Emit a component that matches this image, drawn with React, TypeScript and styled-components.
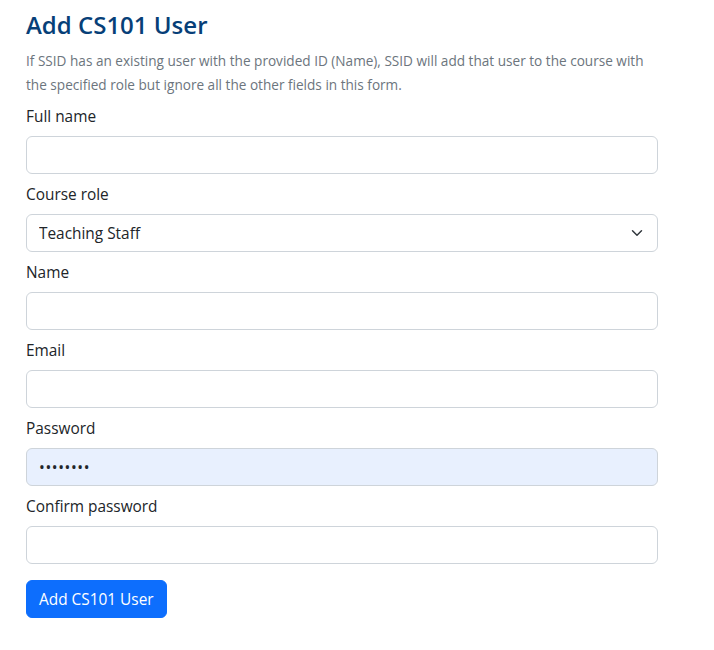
import styled, { createGlobalStyle } from "styled-components";

const GlobalStyle = createGlobalStyle`
  body {
    margin: 0;
    background: #fff;
    font-family: "Open Sans", "Noto Sans", sans-serif;
    color: #212529;
  }
  * { box-sizing: border-box; }
`;

const FIELDS = [
  { id: "fullName", label: "Full name", type: "text", value: "" },
  { id: "role", label: "Course role", type: "select", value: "Teaching Staff" },
  { id: "name", label: "Name", type: "text", value: "" },
  { id: "email", label: "Email", type: "email", value: "" },
  { id: "password", label: "Password", type: "password", value: "secret12" },
  { id: "confirm", label: "Confirm password", type: "password", value: "" },
];

export default function App() {
  const renderFields = FIELDS.map((field) => (
    <FieldGroup key={field.id}>
      <Label htmlFor={field.id}>{field.label}</Label>
      {field.type === "select" ? (
        <Select id={field.id} defaultValue={field.value}>
          <option>Teaching Staff</option>
          <option>Student</option>
        </Select>
      ) : (
        <Input
          id={field.id}
          type={field.type}
          defaultValue={field.value}
          $filled={field.value !== ""}
        />
      )}
    </FieldGroup>
  ));

  return (
    <>
      <GlobalStyle />
      <Page>
        <Title>Add CS101 User</Title>
        <Help>
          If SSID has an existing user with the provided ID (Name), SSID will add that user
          to the course with the specified role but ignore all the other fields in this form.
        </Help>
        <Form>
          {renderFields}
          <SubmitButton type="button">Add CS101 User</SubmitButton>
        </Form>
      </Page>
    </>
  );
}

const Page = styled.div`
  width: 658px;
  padding: 10px 0 20px 26px;
`;

const Title = styled.h3`
  margin: 0 0 10px;
  font-size: 24px;
  font-weight: 600;
  line-height: 29px;
  color: #073f78;
`;

const Help = styled.p`
  margin: 0 0 8px;
  font-size: 13.6px;
  line-height: 24px;
  color: #6c757d;
`;

const Form = styled.form`
  display: flex;
  flex-direction: column;
`;

const FieldGroup = styled.div`
  display: flex;
  flex-direction: column;
  margin-bottom: 9px;
`;

const Label = styled.label`
  font-size: 15.4px;
  line-height: 24px;
  margin-bottom: 7px;
`;

const controlBase = `
  width: 100%;
  height: 38px;
  padding: 6px 12px;
  font-family: inherit;
  font-size: 15.4px;
  color: #212529;
  border: 1px solid #ced4da;
  border-radius: 6px;
  outline: none;
`;

const Input = styled.input<{ $filled: boolean }>`
  ${controlBase}
  background: ${({ $filled }) => ($filled ? "#e8f0fe" : "#fff")};
  letter-spacing: ${({ $filled }) => ($filled ? "0.6px" : "normal")};
`;

const Select = styled.select`
  ${controlBase}
  appearance: none;
  padding-right: 36px;
  background: #fff
    url("data:image/svg+xml,%3csvg xmlns='http://www.w3.org/2000/svg' viewBox='0 0 16 16'%3e%3cpath fill='none' stroke='%23343a40' stroke-linecap='round' stroke-linejoin='round' stroke-width='2' d='m2 5 6 6 6-6'/%3e%3c/svg%3e")
    no-repeat right 12px center / 16px 12px;
`;

const SubmitButton = styled.button`
  align-self: flex-start;
  margin-top: 7px;
  height: 38px;
  padding: 6px 12px;
  font-family: inherit;
  font-size: 15.4px;
  color: #fff;
  background: #0d6efd;
  border: 1px solid #0d6efd;
  border-radius: 6px;
`;
